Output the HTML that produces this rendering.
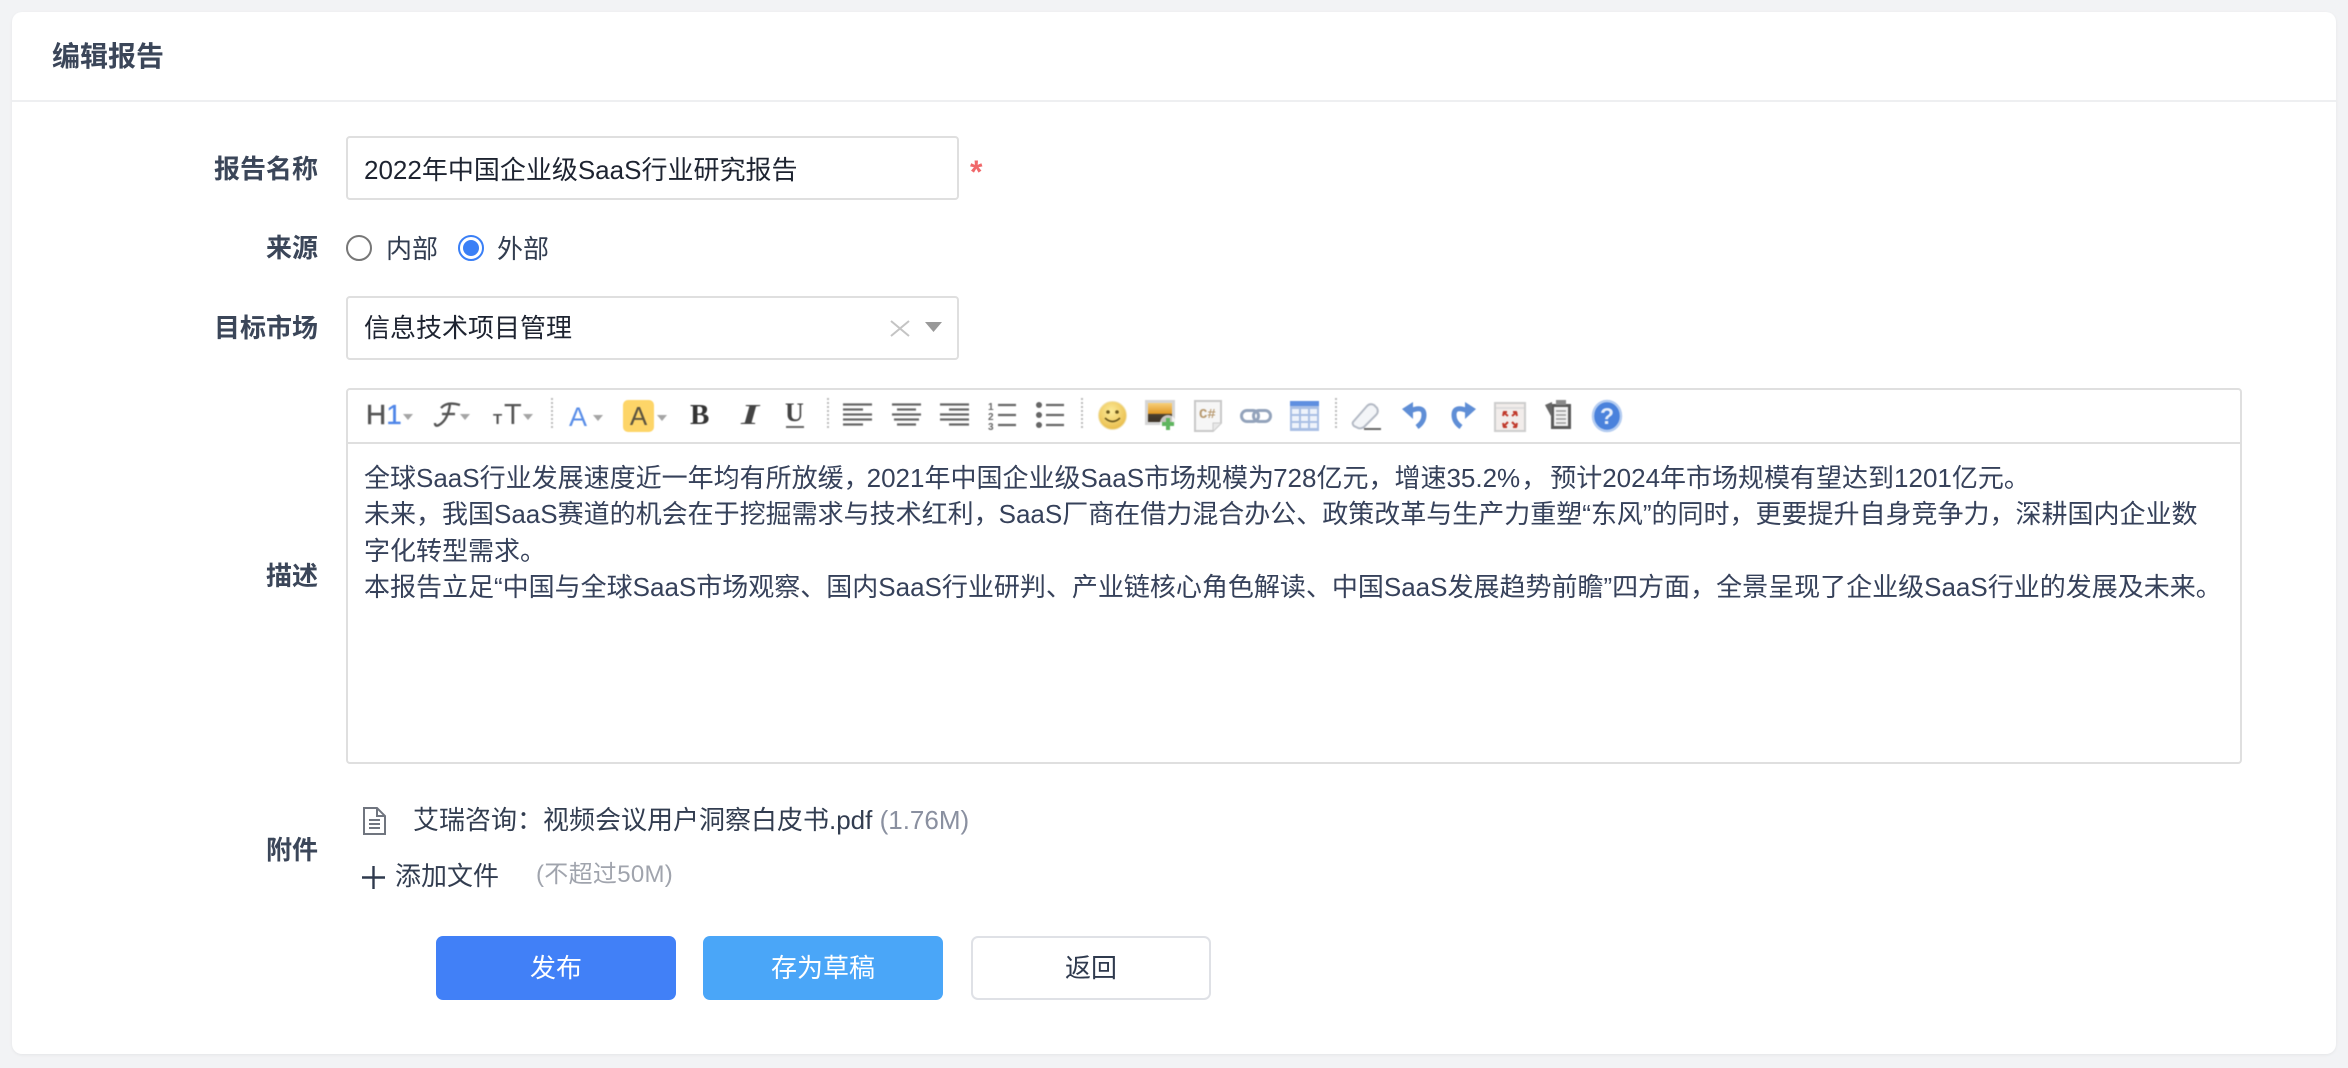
<!DOCTYPE html>
<html lang="zh"><head><meta charset="utf-8"><title>编辑报告</title>
<style>
html,body{margin:0;padding:0;width:2348px;height:1068px;overflow:hidden;background:#f2f3f5;}
body{position:relative;font-family:"Liberation Sans","Noto Sans CJK SC",sans-serif;font-size:26px;color:#323d50;}
.a{position:absolute;white-space:nowrap;}
.card{position:absolute;left:12px;top:12px;width:2324px;height:1042px;background:#fff;border-radius:10px;box-shadow:0 1px 3px rgba(0,0,0,.06);}
.hl{position:absolute;left:12px;top:100px;width:2324px;height:2px;background:#eeeff1;}
.t{line-height:36px;height:36px;}
.lb{right:2030px;font-weight:600;line-height:36px;height:36px;color:#3b4659;}
.box{position:absolute;box-sizing:border-box;border:2px solid #dfdfdf;border-radius:4px;background:#fff;}
.ed{line-height:36.4px;color:#36415a;}
.btn{position:absolute;box-sizing:border-box;top:936px;height:64px;width:240px;border-radius:7px;text-align:center;line-height:64px;font-size:26px;color:#fff;}
svg{position:absolute;overflow:visible;}
.car{fill:#a5a5a5;}
.tb{position:absolute;left:0;top:0;width:2348px;height:1068px;filter:blur(.55px);pointer-events:none;}
</style></head><body>
<div class="card"></div><div class="hl"></div>
<div class="a" style="left:52px;top:37px;font-size:28px;font-weight:600;line-height:40px;color:#3b4659;">编辑报告</div>

<div class="a lb" style="top:151px;">报告名称</div>
<div class="box" style="left:346px;top:136px;width:613px;height:64px;"></div>
<div class="a t" style="left:364px;top:152px;color:#1d2330;">2022年中国企业级SaaS行业研究报告</div>
<div class="a" style="left:970px;top:155px;font-size:32px;font-weight:700;line-height:34px;color:#f0686a;">*</div>

<div class="a lb" style="top:230px;">来源</div>
<svg style="left:346px;top:235px;" width="26" height="26"><circle cx="13" cy="13" r="12" fill="#fff" stroke="#777" stroke-width="2"/></svg>
<div class="a t" style="left:386px;top:231px;">内部</div>
<svg style="left:458px;top:235px;" width="26" height="26"><circle cx="13" cy="13" r="12" fill="#fff" stroke="#3a7ff6" stroke-width="2"/><circle cx="13" cy="13" r="8" fill="#3a7ff6"/></svg>
<div class="a t" style="left:497px;top:231px;">外部</div>

<div class="a lb" style="top:310px;">目标市场</div>
<div class="box" style="left:346px;top:296px;width:613px;height:64px;"></div>
<div class="a t" style="left:364px;top:310px;color:#1d2330;">信息技术项目管理</div>
<svg style="left:890px;top:320px;" width="20" height="16" fill="none" stroke="#c4c4c4" stroke-width="2"><path d="M1 1L19 16M19 1L1 16"/></svg>
<svg style="left:925px;top:322px;" width="17" height="10"><path d="M0 0H17L8.500 10Z" fill="#999"/></svg>

<div class="a lb" style="top:558px;">描述</div>
<div class="box" style="left:346px;top:388px;width:1896px;height:376px;"></div>
<div class="a" style="left:346px;top:442px;width:1896px;height:2px;background:#dfdfdf;"></div>

<!-- toolbar -->
<div class="tb">
<div class="a" style="left:366px;top:399px;font-size:28px;line-height:32px;color:#555;-webkit-text-stroke:.5px #555;">H<span style="color:#4f86e8;-webkit-text-stroke:.3px #4f86e8;">1</span></div>
<svg style="left:403px;top:414px;" width="10" height="6"><path class="car" d="M0 0H10L5 6Z"/></svg>
<svg style="left:435px;top:402px;" width="26" height="26" fill="none" stroke="#555" stroke-width="2.400"><path d="M6 6Q12 -1 25 3"/><path d="M15 2Q13 18 4 23Q0 25 0 21"/><path d="M7 12H20"/></svg>
<svg style="left:460px;top:414px;" width="10" height="6"><path class="car" d="M0 0H10L5 6Z"/></svg>
<div class="a" style="left:493px;top:412px;font-size:15px;font-weight:700;line-height:16px;color:#555;">T</div>
<div class="a" style="left:504px;top:399px;font-size:29px;line-height:32px;color:#555;">T</div>
<svg style="left:523px;top:414px;" width="10" height="6"><path class="car" d="M0 0H10L5 6Z"/></svg>
<svg style="left:551px;top:398px;" width="2" height="32"><path d="M1 0V32" stroke="#bbb" stroke-width="2" stroke-dasharray="2 2"/></svg>
<div class="a" style="left:569px;top:401px;font-size:27px;line-height:32px;color:#5a8ee8;">A</div>
<svg style="left:593px;top:415px;" width="10" height="6"><path class="car" d="M0 0H10L5 6Z"/></svg>
<div class="a" style="left:623px;top:400px;width:31px;height:32px;background:#fdd568;border-radius:5px;text-align:center;font-size:26px;line-height:32px;color:#5b5440;">A</div>
<svg style="left:657px;top:415px;" width="10" height="6"><path class="car" d="M0 0H10L5 6Z"/></svg>
<div class="a" style="left:690px;top:399px;font-family:'Liberation Serif',serif;font-weight:700;font-size:29px;line-height:32px;color:#333;">B</div>
<div class="a" style="left:741px;top:399px;font-family:'Liberation Serif',serif;font-style:italic;font-weight:700;font-size:29px;line-height:32px;color:#444;transform:scaleX(1.6);transform-origin:left;">I</div>
<div class="a" style="left:785px;top:397px;font-family:'Liberation Serif',serif;font-weight:700;font-size:26px;line-height:32px;color:#444;">U</div>
<div class="a" style="left:786px;top:426px;width:18px;height:2px;background:#666;"></div>
<svg style="left:827px;top:398px;" width="2" height="32"><path d="M1 0V32" stroke="#bbb" stroke-width="2" stroke-dasharray="2 2"/></svg>

<svg style="left:843px;top:403px;" width="30" height="24" stroke="#666" stroke-width="2.200"><path d="M0 1.500H29M0 6.500H20M0 11.500H29M0 16.500H29M0 21.500H20"/></svg>
<svg style="left:892px;top:403px;" width="30" height="24" stroke="#666" stroke-width="2.200"><path d="M0 1.500H29M5 6.500H24M0 11.500H29M2 16.500H27M5 21.500H24"/></svg>
<svg style="left:940px;top:403px;" width="30" height="24" stroke="#666" stroke-width="2.200"><path d="M0 1.500H29M9 6.500H29M0 11.500H29M0 16.500H29M9 21.500H29"/></svg>
<svg style="left:988px;top:402px;" width="30" height="28" stroke="#666" stroke-width="2.200" fill="none"><path d="M10 3H28M10 13H28M10 23H28"/><text x="0" y="8" font-size="10" font-weight="700" fill="#666" stroke="none" font-family="Liberation Sans">1</text><text x="0" y="18" font-size="10" font-weight="700" fill="#666" stroke="none" font-family="Liberation Sans">2</text><text x="0" y="28" font-size="10" font-weight="700" fill="#666" stroke="none" font-family="Liberation Sans">3</text></svg>
<svg style="left:1036px;top:402px;" width="30" height="28" stroke="#666" stroke-width="2.200" fill="none"><path d="M10 3H28M10 13H28M10 23H28"/><circle cx="3" cy="3" r="3" fill="#666" stroke="none"/><circle cx="3" cy="13" r="3" fill="#666" stroke="none"/><circle cx="3" cy="23" r="3" fill="#666" stroke="none"/></svg>
<svg style="left:1081px;top:398px;" width="2" height="32"><path d="M1 0V32" stroke="#bbb" stroke-width="2" stroke-dasharray="2 2"/></svg>

<svg style="left:1098px;top:401px;" width="29" height="29"><defs><radialGradient id="sm" cx=".45" cy=".35" r=".65"><stop offset="0" stop-color="#fceb98"/><stop offset="1" stop-color="#e9bd4c"/></radialGradient></defs><circle cx="14.500" cy="14.500" r="14" fill="url(#sm)" stroke="#f1e2b0"/><circle cx="10" cy="11" r="1.800" fill="#6d5a1e"/><circle cx="19" cy="11" r="1.800" fill="#6d5a1e"/><path d="M7 17Q14.500 24 22 17" fill="none" stroke="#6d5a1e" stroke-width="1.600"/></svg>
<svg style="left:1145px;top:400px;" width="31" height="31"><defs><linearGradient id="sky" x1="0" y1="0" x2="0" y2="1"><stop offset="0" stop-color="#f6cf7a"/><stop offset=".55" stop-color="#e39a25"/><stop offset=".6" stop-color="#4a3f2f"/><stop offset="1" stop-color="#3d3428"/></linearGradient></defs><rect width="30" height="25" fill="#d5d5d5"/><rect x="3" y="3" width="24" height="19" fill="url(#sky)"/><circle cx="23" cy="23" r="8" fill="#fff" opacity=".7"/><path d="M21 18H25V22H29V26H25V30H21V26H17V22H21Z" fill="#5fb55f"/></svg>
<svg style="left:1194px;top:400px;" width="28" height="32"><path d="M1 1H27V23L19 31H1Z" fill="#f6f6f6" stroke="#c8c8c8" stroke-width="2"/><path d="M19 31V23H27" fill="#e8e8e8" stroke="#ccc"/><text x="5" y="18" font-size="14" font-weight="700" font-family="Liberation Mono" fill="#b89a70">C#</text></svg>
<svg style="left:1240px;top:409px;" width="32" height="14" fill="none"><rect x="1.500" y="1.500" width="17" height="11" rx="5.500" stroke="#93a3bb" stroke-width="3"/><rect x="13.500" y="1.500" width="17" height="11" rx="5.500" stroke="#93a3bb" stroke-width="3"/></svg>
<svg style="left:1290px;top:401px;" width="29" height="30"><rect width="29" height="30" fill="#a9bfe4"/><rect width="29" height="5" fill="#5f8fe0"/><rect x="2" y="8" width="7" height="5" fill="#eef3fb"/><rect x="11" y="8" width="7" height="5" fill="#eef3fb"/><rect x="20" y="8" width="7" height="5" fill="#eef3fb"/><rect x="2" y="15" width="7" height="5" fill="#eef3fb"/><rect x="11" y="15" width="7" height="5" fill="#eef3fb"/><rect x="20" y="15" width="7" height="5" fill="#eef3fb"/><rect x="2" y="22" width="7" height="5" fill="#eef3fb"/><rect x="11" y="22" width="7" height="5" fill="#eef3fb"/><rect x="20" y="22" width="7" height="5" fill="#eef3fb"/></svg>
<svg style="left:1335px;top:398px;" width="2" height="32"><path d="M1 0V32" stroke="#bbb" stroke-width="2" stroke-dasharray="2 2"/></svg>

<svg style="left:1351px;top:403px;" width="30" height="28"><path d="M2 19L16 3Q19 0 23 2L26 5Q28 9 25 12L13 24Q10 26 7 25L3 23Q1 21 2 19Z" fill="#f3f5f8" stroke="#b4bac5" stroke-width="2"/><path d="M13 26H30" stroke="#666" stroke-width="2"/></svg>
<svg style="left:1402px;top:402px;" width="26" height="26" fill="none"><path d="M8 9Q22 3 22 13Q22 20 15 25" stroke="#5f8ed6" stroke-width="5"/><path d="M0 7L11 0V17Z" fill="#5f8ed6"/></svg>
<svg style="left:1450px;top:402px;" width="26" height="26" fill="none"><path d="M18 9Q4 3 4 13Q4 20 11 25" stroke="#5f8ed6" stroke-width="5"/><path d="M26 7L15 0V17Z" fill="#5f8ed6"/></svg>
<svg style="left:1494px;top:402px;" width="32" height="30"><rect x="1" y="1" width="30" height="28" fill="#f2edeb" stroke="#cdcdcd" stroke-width="2"/><path d="M2 6H30" stroke="#ddd" stroke-width="2"/><path d="M9 10L14 14M9 14L10 10L13 10M23 10L18 14M23 14L22 10L19 10M9 25L14 20M9 21L10 25L13 25M23 25L18 20M23 21L22 25L19 25" stroke="#c0392b" stroke-width="2" fill="none"/></svg>
<svg style="left:1544px;top:400px;" width="28" height="30"><path d="M7 4H27V29H7Z" fill="#5a5a5a"/><path d="M10 7H24V26H10Z" fill="#f1f1f1"/><path d="M12 11H22M12 15H22M12 19H22M12 23H22" stroke="#999" stroke-width="1.500"/><path d="M1 5L8 2V18Z" fill="#666"/><rect x="12" y="0" width="10" height="5" fill="#8a8a8a"/></svg>
<svg style="left:1592px;top:400px;" width="30" height="32"><ellipse cx="15" cy="16" rx="14" ry="15" fill="#4a82dc" stroke="#b4ccf0" stroke-width="2.500"/><text x="15" y="24" text-anchor="middle" font-size="23" font-weight="700" font-family="Liberation Sans" fill="#e6eefb">?</text></svg>
</div>

<!-- editor text -->
<div class="a ed" style="left:364px;top:460px;">全球SaaS行业发展速度近一年均有所放缓，<span style="margin-left:-3px">2021</span>年中国企业级SaaS市场规模为<span style="margin-left:-1px">728</span>亿元，增速35.2%<span style="margin-left:1px;margin-right:3px">，</span>预计2024年市场规模有望达到1201亿元。</div>
<div class="a ed" style="left:364px;top:496.4px;">未来，我国SaaS赛道的机会在于挖掘需求与技术红利，<span style="margin-left:-1px">SaaS</span>厂商在借力混合办公、政策改革与生产力重塑“东风”的同时，更要提升自身竞争力，深耕国内企业数</div>
<div class="a ed" style="left:364px;top:532.8px;">字化转型需求。</div>
<div class="a ed" style="left:364px;top:569.2px;">本报告立足“中国与全球SaaS市场观察、国内SaaS行业研判、产业链核心角色解读、中国SaaS发展趋势前瞻”四方面，全景呈现了企业级SaaS行业的发展及未来。</div>

<!-- attachments -->
<svg style="left:362px;top:807px;" width="24" height="28" fill="none" stroke="#70757f" stroke-width="2"><path d="M2 1H15L23 9V27H2Z"/><path d="M15 1V9H23M7 13H18M7 17H18M7 21H18"/></svg>
<div class="a t" style="left:413px;top:802px;">艾瑞咨询：视频会议用户洞察白皮书.pdf <span style="color:#8a90a0">(1.76M)</span></div>
<div class="a lb" style="top:832px;">附件</div>
<svg style="left:362px;top:866px;" width="24" height="23" stroke="#2f3a4e" stroke-width="2.400"><path d="M0 11.500H23M11.500 0V23"/></svg>
<div class="a t" style="left:395px;top:858px;">添加文件</div>
<div class="a t" style="left:536px;top:857px;font-size:24px;letter-spacing:.3px;color:#a0a4ad;">(不超过50M)</div>

<!-- buttons -->
<div class="btn" style="left:436px;background:#4180f7;">发布</div>
<div class="btn" style="left:703px;background:#4aa6f8;">存为草稿</div>
<div class="btn" style="left:971px;background:#fff;border:2px solid #dfe1e6;color:#2f3a4e;line-height:60px;">返回</div>
</body></html>
